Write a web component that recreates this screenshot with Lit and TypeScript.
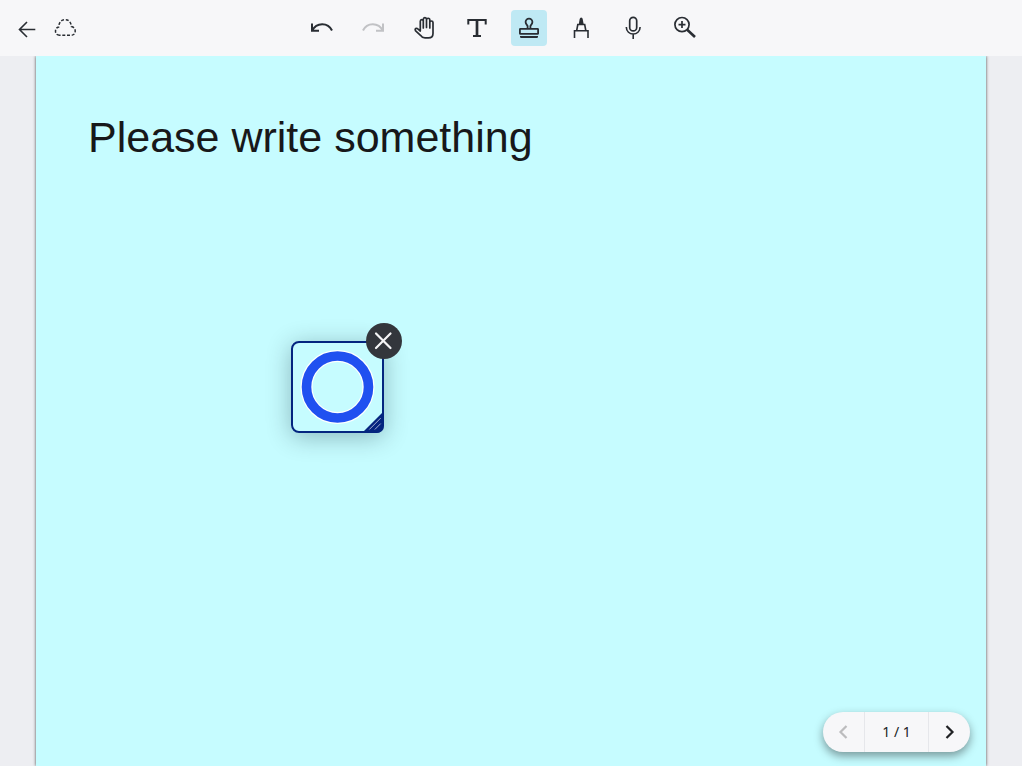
import { LitElement, html, css, svg } from "lit";
import { customElement, property, state } from "lit/decorators.js";
import { classMap } from "lit/directives/class-map.js";

const icons = {
  back: svg`<path d="M27.300 19.500H11.500M19 12l-7.500 7.500 7.500 7.500"/>`,
  cloud: svg`<path stroke-dasharray="3 1.700" stroke-width="1.500" d="M13.500 25.200c-3.200 0-4-2.200-4-4 0-2.200 1.200-3.700 3.200-4.200C13 12.500 15 9.700 19 9.700s6 2.700 6.500 6.900c2.600.5 3.700 2.500 3.700 4.500 0 2.600-1.500 4.100-3.800 4.100z"/>`,
  undo: svg`<path stroke-width="2" d="M9 13.500V20.700H16M9 20.700C13.500 12 25 12 29 20.500"/>`,
  redo: svg`<path stroke-width="2" d="M28 13.500V20.700H21M28 20.700C23.500 12 12 12 8 20.500"/>`,
  hand: svg`<path stroke-width="1.700" stroke-linejoin="round" stroke-linecap="round" d="M13.300 20.500V11.300c0-2.200 3-2.200 3 0V18M16.300 17.500V9.200c0-2.200 3.200-2.200 3.200 0V17.500M19.500 17.500V9.900c0-2.200 3.300-2.200 3.300 0V18M22.800 18V12.500c0-2 3.200-2 3.200 0V23.500c0 3.500-2 4.400-4.500 4.400h-3.500c-2.300 0-3.500-1-4.500-2.600L8.400 20.600c-1-1.900 1.100-3 2.400-1.700L13.300 21"/>`,
  text: svg`<path stroke-width="2" d="M9.300 14.500V10H26.700V14.500M14 26H22"/><path stroke-width="2.700" d="M18 10V26"/>`,
  stamp: svg`<path stroke-width="1.800" d="M16.600 18.500V16.300c0-1.300-2-1.800-2-4.200a3.400 3.400 0 0 1 6.800 0c0 2.400-2 2.900-2 4.200V18.500"/><rect stroke-width="1.800" x="8.900" y="18.900" width="18.200" height="5" rx=".5"/><path fill="currentColor" stroke="none" d="M9 26H27V26.800q0 1.200-1.200 1.200H10.200q-1.200 0-1.200-1.200z"/>`,
  pen: svg`<path d="M11.500 28V20.800H25V28M13.700 20.500 14.800 14.500H21.700L22.800 20.500"/><path fill="currentColor" stroke="none" d="M15.700 14.500 16.700 9Q17 7.500 18.200 7.500T19.700 9L20.700 14.500z"/>`,
  mic: svg`<rect stroke-width="1.700" x="14.700" y="7.300" width="7" height="13.600" rx="3.500"/><path d="M11.300 17c0 9.300 13.800 9.300 13.800 0M18.200 24V29"/>`,
  zoom: svg`<circle stroke-width="1.700" cx="15" cy="14.600" r="7.100"/><path stroke-width="1.700" d="M15 11.100V18.100M11.500 14.600H18.500"/><path stroke-width="2.600" d="M20.200 19.700 28 27"/>`,
};

@customElement("tool-button")
class ToolButton extends LitElement {
  @property() icon: keyof typeof icons = "back";
  @property() label = "";
  @property({ type: Boolean }) active = false;
  @property({ type: Boolean }) disabled = false;

  static styles = css`
    :host { display: block; }
    button {
      display: block;
      width: 36px;
      height: 36px;
      padding: 0;
      border: 0;
      border-radius: 4px;
      background: none;
      color: #292d33;
      cursor: pointer;
    }
    button.active { background: #bfe9f4; }
    button:disabled { color: #c1c2c5; cursor: default; }
    svg { display: block; fill: none; stroke: currentColor; stroke-width: 1.600; }
  `;

  render() {
    return html`<button
      type="button"
      class=${classMap({ active: this.active })}
      aria-label=${this.label}
      ?disabled=${this.disabled}
    >
      <svg width="36" height="36" viewBox="0 0 36 36" aria-hidden="true">${icons[this.icon]}</svg>
    </button>`;
  }
}

@customElement("page-pager")
class PagePager extends LitElement {
  @property({ type: Number }) page = 1;
  @property({ type: Number }) total = 1;

  static styles = css`
    :host {
      display: flex;
      height: 40px;
      border-radius: 20px;
      background: #f7f7f9;
      box-shadow: 0 4px 10px rgba(0, 0, 0, 0.4);
    }
    button {
      display: grid;
      place-items: center;
      width: 41px;
      padding: 0;
      border: 0;
      background: none;
      color: #202124;
      cursor: pointer;
    }
    button:disabled { color: #bcbcbe; }
    svg { fill: none; stroke: currentColor; stroke-width: 2.200; }
    .count {
      display: grid;
      place-items: center;
      width: 63px;
      border: solid #e6e7eb;
      border-width: 0 1px;
      font: 14px/20px "Noto Sans", "Open Sans", sans-serif;
      color: #202124;
    }
  `;

  render() {
    return html`
      <button type="button" aria-label="Previous page" ?disabled=${this.page <= 1}>
        <svg width="16" height="16" viewBox="0 0 16 16"><path d="M10.500 2l-6 6 6 6" /></svg>
      </button>
      <span class="count">${this.page} / ${this.total}</span>
      <button type="button" aria-label="Next page">
        <svg width="16" height="16" viewBox="0 0 16 16"><path d="M4.500 2l6 6-6 6" /></svg>
      </button>
    `;
  }
}

@customElement("stamp-item")
class StampItem extends LitElement {
  static styles = css`
    :host {
      display: block;
      box-sizing: border-box;
      width: 93px;
      height: 92px;
      border: 2px solid #04257f;
      border-radius: 8px;
      box-shadow: 0 4px 24px rgba(0, 30, 40, 0.3);
    }
    svg { display: block; }
    .close {
      position: absolute;
      top: -20px;
      right: -20px;
      width: 36px;
      height: 36px;
      padding: 0;
      border: 0;
      border-radius: 50%;
      background: #33363c;
      cursor: pointer;
    }
    .resize { position: absolute; right: -2px; bottom: -2px; }
  `;

  render() {
    return html`
      <svg width="89" height="88" viewBox="0 0 89 88" fill="none" role="img" aria-label="Circle stamp">
        <circle cx="44.500" cy="44" r="31" stroke="#fff" stroke-width="12" />
        <circle cx="44.500" cy="44" r="31" stroke="#2050f0" stroke-width="9.600" />
      </svg>
      <svg class="resize" width="22" height="22" viewBox="0 0 22 22" aria-hidden="true">
        <path fill="#04257f" d="M22 0V14q0 8-8 8H0z" />
        <path stroke="#a3afd2" d="M7.300 18.500 18.700 7.100M12.800 18.500 18.700 12.600" />
      </svg>
      <button class="close" type="button" aria-label="Remove stamp">
        <svg width="36" height="36" viewBox="0 0 36 36"><path stroke="#f5f5f6" stroke-width="2.200" stroke-linecap="round" d="M10 10.500 24.500 25M24.500 10.500 10 25" /></svg>
      </button>
    `;
  }
}

@customElement("app-root")
class AppRoot extends LitElement {
  @state() private tool = "stamp";

  private tools: { icon: keyof typeof icons; label: string; disabled?: boolean }[] = [
    { icon: "undo", label: "Undo" },
    { icon: "redo", label: "Redo", disabled: true },
    { icon: "hand", label: "Move" },
    { icon: "text", label: "Text" },
    { icon: "stamp", label: "Stamp" },
    { icon: "pen", label: "Pen" },
    { icon: "mic", label: "Record" },
    { icon: "zoom", label: "Zoom in" },
  ];

  static styles = css`
    :host {
      display: flex;
      flex-direction: column;
      height: 100vh;
      overflow: hidden;
      background: #edeef2;
    }
    header {
      display: grid;
      grid-template-columns: 1fr auto 1fr;
      align-items: center;
      height: 56px;
      flex: none;
      padding: 0 24px 0 8px;
      box-sizing: border-box;
      background: #f7f7f9;
    }
    .nav { display: flex; gap: 2px; }
    .tools { display: flex; gap: 16px; }
    main {
      display: flex;
      flex: 1;
      min-height: 0;
      padding: 0 36px;
      overflow: hidden;
    }
    .sheet {
      position: relative;
      flex: 1;
      padding: 56px 52px;
      background: #c6fcff;
      box-shadow: 0 0 3px rgba(0, 0, 0, 0.7);
    }
    h1 {
      margin: 0;
      font: 400 43px/50px "Liberation Sans", Arial, sans-serif;
      color: #17181a;
    }
    stamp-item { position: absolute; left: 255px; top: 285px; }
    page-pager { position: absolute; right: 16px; bottom: 14px; }
  `;

  render() {
    return html`
      <header>
        <nav class="nav" aria-label="Document">
          <tool-button icon="back" label="Back"></tool-button>
          <tool-button icon="cloud" label="Sync status"></tool-button>
        </nav>
        <div class="tools" role="toolbar" aria-label="Tools">
          ${this.tools.map(
            (t) => html`<tool-button
              .icon=${t.icon}
              .label=${t.label}
              ?active=${t.icon === this.tool}
              ?disabled=${!!t.disabled}
              @click=${() => { if (!t.disabled) this.tool = t.icon; }}
            ></tool-button>`
          )}
        </div>
      </header>
      <main>
        <section class="sheet">
          <h1>Please write something</h1>
          <stamp-item></stamp-item>
          <page-pager .page=${1} .total=${1}></page-pager>
        </section>
      </main>
    `;
  }
}
